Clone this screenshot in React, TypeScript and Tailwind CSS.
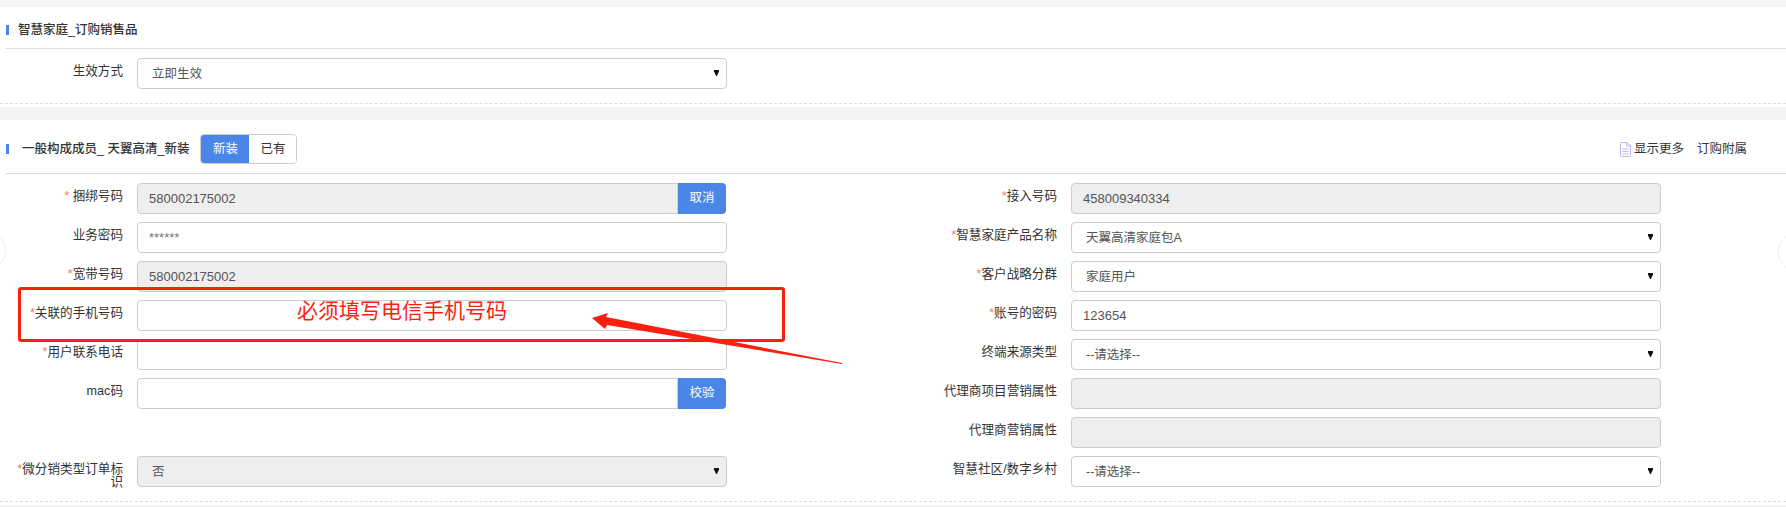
type Row = {
  label: string
  required?: boolean
  spaced?: boolean
  kind?: "input" | "select"
  value?: string
  disabled?: boolean
  action?: string
  muted?: boolean
}

const rows: (Row | null)[] = [
  { label: "捆绑号码", required: true, spaced: true, value: "580002175002", disabled: true, action: "取消" },
  { label: "接入号码", required: true, value: "458009340334", disabled: true },
  { label: "业务密码", value: "******", muted: true },
  { label: "智慧家庭产品名称", required: true, kind: "select", value: "天翼高清家庭包A" },
  { label: "宽带号码", required: true, value: "580002175002", disabled: true },
  { label: "客户战略分群", required: true, kind: "select", value: "家庭用户" },
  { label: "关联的手机号码", required: true },
  { label: "账号的密码", required: true, value: "123654" },
  { label: "用户联系电话", required: true },
  { label: "终端来源类型", kind: "select", value: "--请选择--" },
  { label: "mac码", action: "校验" },
  { label: "代理商项目营销属性", disabled: true },
  null,
  { label: "代理商营销属性", disabled: true },
  { label: "微分销类型订单标识", required: true, kind: "select", value: "否", disabled: true },
  { label: "智慧社区/数字乡村", kind: "select", value: "--请选择--" },
]

function SelectBox({ value, disabled }: { value?: string; disabled?: boolean }) {
  return (
    <div className="relative h-[31px] w-full">
      <select
        disabled={disabled}
        defaultValue={value}
        className={`h-full w-full appearance-none rounded border border-[#cccccc] pl-[14px] pt-[1px] text-[12.5px] text-[#555555] outline-none ${
          disabled ? "bg-[#eeeeee]" : "bg-white"
        }`}
      >
        <option>{value}</option>
      </select>
      <svg className="absolute right-[8px] top-[12px]" width="5" height="6" viewBox="0 0 5 6">
        <polygon points="0,0 5,0 5,1.5 2.9,6 2.1,6 0,1.5" fill="#111111" />
      </svg>
    </div>
  )
}

function InputBox({ row }: { row: Row }) {
  return (
    <div className="flex h-[31px] w-full">
      <input
        readOnly
        value={row.value ?? ""}
        className={`h-full min-w-0 flex-1 border border-[#cccccc] pl-[11px] text-[13px] outline-none ${
          row.action ? "rounded-l" : "rounded"
        } ${row.disabled ? "bg-[#eeeeee]" : "bg-white"} ${row.muted ? "text-[#777777]" : "text-[#555555]"}`}
      />
      {row.action && (
        <button className="mr-[1px] h-full w-[48px] shrink-0 rounded-r bg-[#4a86e8] text-[12.5px] text-white">
          {row.action}
        </button>
      )}
    </div>
  )
}

function FormRow({ row }: { row: Row }) {
  return (
    <div className="flex items-start">
      <label className="ml-[8px] w-[115px] shrink-0 pt-[7px] text-right text-[12.6px] leading-[13px] text-[#333333]">
        {row.required && <span className="text-[#fb7d5c]">*</span>}
        {row.spaced && " "}
        {row.label}
      </label>
      <div className="ml-[14px] w-[590px]">
        {row.kind === "select" ? <SelectBox value={row.value} disabled={row.disabled} /> : <InputBox row={row} />}
      </div>
    </div>
  )
}

function TitleMark() {
  return <span className="h-[10px] w-[3px] shrink-0 bg-[#4a86e8]" />
}

function DocIcon() {
  return (
    <svg width="11" height="15" viewBox="0 0 11 15" fill="none" stroke="#b9b9f0" strokeWidth="1">
      <path d="M1.5 0.5H7L10.5 4V13.5A1 1 0 0 1 9.5 14.5H1.5A1 1 0 0 1 0.5 13.5V1.5A1 1 0 0 1 1.5 0.5Z" />
      <path d="M7 0.5V4H10.5" />
      <path d="M2.5 7H8.5M2.5 9.5H8.5M2.5 12H8.5" />
    </svg>
  )
}

export default function App() {
  return (
    <div
      className="relative h-[507px] w-full overflow-hidden bg-[#f5f5f5] text-[#333333]"
      style={{ fontFamily: '"Liberation Sans", "Noto Sans CJK SC", sans-serif' }}
    >
      <div className="h-[7px]" />

      {/* 订购销售品 */}
      <section className="h-[100px] bg-white">
        <div className="ml-[6px] flex h-[42px] items-center border-b border-[#dddddd] pt-[5px]">
          <TitleMark />
          <h2 className="ml-[9px] text-[12.5px] font-medium text-[#333333]">智慧家庭_订购销售品</h2>
        </div>
        <div className="border-b border-dashed border-[#dddddd] pb-[14px] pt-[9px]">
          <div className="flex items-start">
            <label className="ml-[8px] w-[115px] pt-[7px] text-right text-[12.6px] leading-[13px]">生效方式</label>
            <div className="ml-[14px] w-[590px]">
              <SelectBox value="立即生效" />
            </div>
          </div>
        </div>
      </section>

      <div className="h-[13px]" />

      {/* 一般构成成员 */}
      <section className="h-[385px] bg-white">
        <div className="ml-[6px] flex h-[54px] items-center border-b border-[#dddddd] pt-[5px]">
          <TitleMark />
          <h2 className="ml-[13px] text-[12.5px] font-medium text-[#333333]">一般构成成员_ 天翼高清_新装</h2>
          <div className="ml-[11px] flex h-[30px] overflow-hidden rounded border border-[#cccccc] text-[12.5px]">
            <button className="w-[48px] bg-[#4a86e8] text-white">新装</button>
            <button className="w-[47px] bg-white text-[#333333]">已有</button>
          </div>
          <div className="ml-auto mr-[39px] flex items-center text-[12.5px] text-[#333333]">
            <DocIcon />
            <span className="ml-[3px]">显示更多</span>
            <span className="ml-[13px]">订购附属</span>
          </div>
        </div>
        <div className="border-b border-dashed border-[#dddddd] pb-[12px] pt-[9px]">
          <div className="grid grid-cols-[934px_1fr] gap-y-2">
            {rows.map((row, i) => (row ? <FormRow key={i} row={row} /> : <div key={i} />))}
          </div>
        </div>
      </section>

      {/* 翻页按钮 */}
      <div className="absolute left-[-34px] top-[230px] h-[40px] w-[40px] rounded-full border border-[#eeeeee] bg-white" />
      <div className="absolute left-[1778px] top-[232px] h-[40px] w-[40px] rounded-full border border-[#eeeeee] bg-white" />

      {/* 标注 */}
      <div className="absolute left-[18px] top-[287px] flex h-[55px] w-[767px] rounded-[3px] border-[3px] border-[#fb1f12] pl-[276px] pt-[6px]">
        <span className="text-[21px] leading-[30px] text-[#fb1f12]">必须填写电信手机号码</span>
      </div>
      <svg className="absolute left-[585px] top-[305px]" width="265" height="65" viewBox="585 305 265 65">
        <polygon points="592,318 608,313 606,317 842,363 842,364 607,325 605,329" fill="#fb1f12" />
      </svg>
    </div>
  )
}
